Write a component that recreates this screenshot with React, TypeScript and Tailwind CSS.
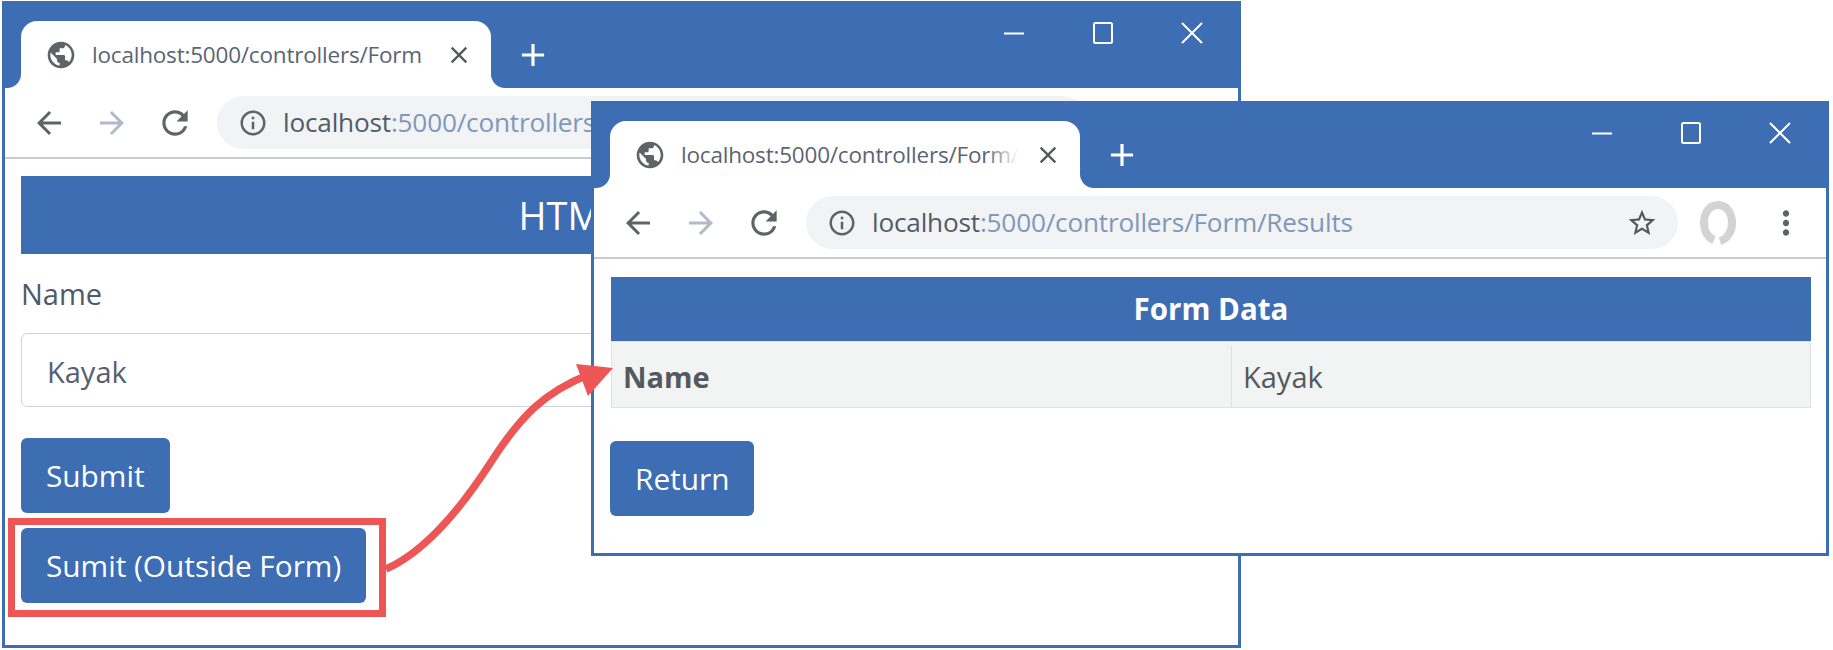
import React from 'react';
import { MdPublic, MdClose, MdArrowBack, MdArrowForward, MdRefresh, MdInfoOutline, MdStarBorder, MdMoreVert, MdAdd } from 'react-icons/md';

const font = { fontFamily: '"Open Sans", "Noto Sans", sans-serif' };

const WindowControls: React.FC = () => (
  <div className="ml-auto flex items-center gap-[65px] pt-[17px] pr-[34px] self-start text-white">
    <svg width="24" height="24" viewBox="0 0 24 24"><path d="M2 12.5h20" stroke="currentColor" strokeWidth="2" /></svg>
    <svg width="24" height="24" viewBox="0 0 24 24" fill="none"><rect x="3" y="2" width="18" height="20" rx="1.5" stroke="currentColor" strokeWidth="2" /></svg>
    <svg width="24" height="24" viewBox="0 0 24 24"><path d="M2 2l20 20M22 2L2 22" stroke="currentColor" strokeWidth="2" /></svg>
  </div>
);

const Tab: React.FC<{ title: string; fade?: boolean }> = ({ title, fade }) => (
  <div className="relative ml-[16px] mt-[17px] flex h-[67px] w-[470px] items-center rounded-t-[16px] bg-white pl-[24px] pr-[18px]">
    <div className="absolute -left-[14px] bottom-0 h-[14px] w-[14px] bg-white">
      <div className="h-full w-full rounded-br-[14px] bg-[#3d6db3]" />
    </div>
    <div className="absolute -right-[14px] bottom-0 h-[14px] w-[14px] bg-white">
      <div className="h-full w-full rounded-bl-[14px] bg-[#3d6db3]" />
    </div>
    <MdPublic size={32} className="shrink-0 text-[#5f6368]" />
    <div className="relative ml-[15px] whitespace-nowrap text-[22.5px] tracking-[-0.2px] text-[#5b6472]">
      {title}
      {fade && <div className="absolute inset-y-0 right-0 w-[34px] bg-gradient-to-r from-transparent to-white" />}
    </div>
    <MdClose size={28} className="ml-auto shrink-0 text-[#55585e]" />
  </div>
);

const Toolbar: React.FC<{ address: string; host: string; extras?: boolean }> = ({ host, address, extras }) => (
  <div className="flex h-[71px] shrink-0 items-center border-b-2 border-[#c9cbd0] bg-white pl-[26px]">
    <MdArrowBack size={36} className="shrink-0 text-[#5f6368]" />
    <MdArrowForward size={36} className="ml-[27px] shrink-0 text-[#b3b9c6]" />
    <MdRefresh size={38} className="ml-[26px] shrink-0 text-[#5f6368]" />
    <div className="ml-[23px] flex h-[53px] w-[872px] shrink-0 items-center rounded-full bg-[#f1f3f4] pl-[21px] pr-[20px]">
      <MdInfoOutline size={30} className="shrink-0 text-[#5f6368]" />
      <div className="ml-[15px] whitespace-nowrap text-[26.2px] tracking-[-0.2px] text-[#8097b9]">
        <span className="text-[#525b69]">{host}</span>
        {address}
      </div>
      <MdStarBorder size={32} className="ml-auto shrink-0 text-[#54575c]" />
    </div>
    {extras && (
      <>
        <svg width="38" height="46" viewBox="0 0 38 46" fill="none" className="ml-[21px] shrink-0">
          <path d="M15 40C8 37 5 30 5 23C5 12 11 5 19 5C27 5 33 12 33 23C33 32 28 39 21 41" stroke="#d3d3d3" strokeWidth="8" />
        </svg>
        <MdMoreVert size={38} className="ml-[30px] shrink-0 text-[#5f6368]" />
      </>
    )}
  </div>
);

const FormButton: React.FC<{ label: string }> = ({ label }) => (
  <button className="h-[75px] rounded-[6px] bg-[#3d6db3] px-[25px] text-[29.8px] leading-[40px] text-white">{label}</button>
);

const App: React.FC = () => {
  return (
    <div className="relative h-[650px] w-[1833px] overflow-hidden bg-white" style={font}>
      {/* Form window */}
      <div className="absolute left-[2px] top-[1px] flex h-[647px] w-[1239px] flex-col border-[3px] border-[#3d6db3] bg-white">
        <div className="flex h-[84px] shrink-0 bg-[#3d6db3]">
          <Tab title="localhost:5000/controllers/Form" />
          <MdAdd size={38} className="ml-[23px] mt-[32px] text-white" />
          <WindowControls />
        </div>
        <Toolbar host="localhost" address=":5000/controllers/Form" />
        <div className="flex flex-col items-start px-[16px] pt-[17px]">
          <div className="flex h-[78px] w-full items-center justify-center bg-[#3d6db3] text-[38px] text-white">HTML Form</div>
          <div className="mt-[20px] text-[29px] leading-[40px] text-[#4f5967]">Name</div>
          <div className="mt-[19px] flex h-[74px] w-full items-center rounded-[6px] border border-[#cfd3d8] px-[25px] pt-[4px] text-[29px] text-[#566071]">Kayak</div>
          <div className="mt-[31px]"><FormButton label="Submit" /></div>
          <div className="mt-[15px]"><FormButton label="Sumit (Outside Form)" /></div>
        </div>
      </div>

      {/* Results window */}
      <div className="absolute left-[591px] top-[101px] flex h-[455px] w-[1238px] flex-col border-[3px] border-[#3d6db3] bg-white">
        <div className="flex h-[84px] shrink-0 bg-[#3d6db3]">
          <Tab title="localhost:5000/controllers/Form/" fade />
          <MdAdd size={38} className="ml-[23px] mt-[32px] text-white" />
          <WindowControls />
        </div>
        <Toolbar host="localhost" address=":5000/controllers/Form/Results" extras />
        <div className="flex flex-col items-start pl-[17px] pr-[15px] pt-[18px]">
          <div className="w-full">
            <div className="flex h-[64px] items-center justify-center bg-[#3d6db3] text-[29.5px] font-bold text-white">Form Data</div>
            <div className="flex h-[67px] border border-[#dee2e6] bg-[#f2f4f4] pt-[4px] text-[29px] text-[#55595f]">
              <div className="flex w-[620px] items-center border-r border-[#dee2e6] pl-[11px] font-bold">Name</div>
              <div className="flex items-center pl-[11px]">Kayak</div>
            </div>
          </div>
          <div className="-ml-[1px] mt-[33px]"><FormButton label="Return" /></div>
        </div>
      </div>

      {/* Callout over both windows */}
      <div className="absolute left-[8px] top-[518px] h-[99px] w-[378px] border-[7px] border-[#ee5555]" />
      <svg className="absolute inset-0" width="1833" height="650" viewBox="0 0 1833 650" fill="none">
        <path d="M386 569C425 552 460 510 491 462S545 392 590 374" stroke="#ee5555" strokeWidth="7.5" />
        <path d="M613 368L576 364L588 396Z" fill="#ee5555" />
      </svg>
    </div>
  );
};

export default App;
